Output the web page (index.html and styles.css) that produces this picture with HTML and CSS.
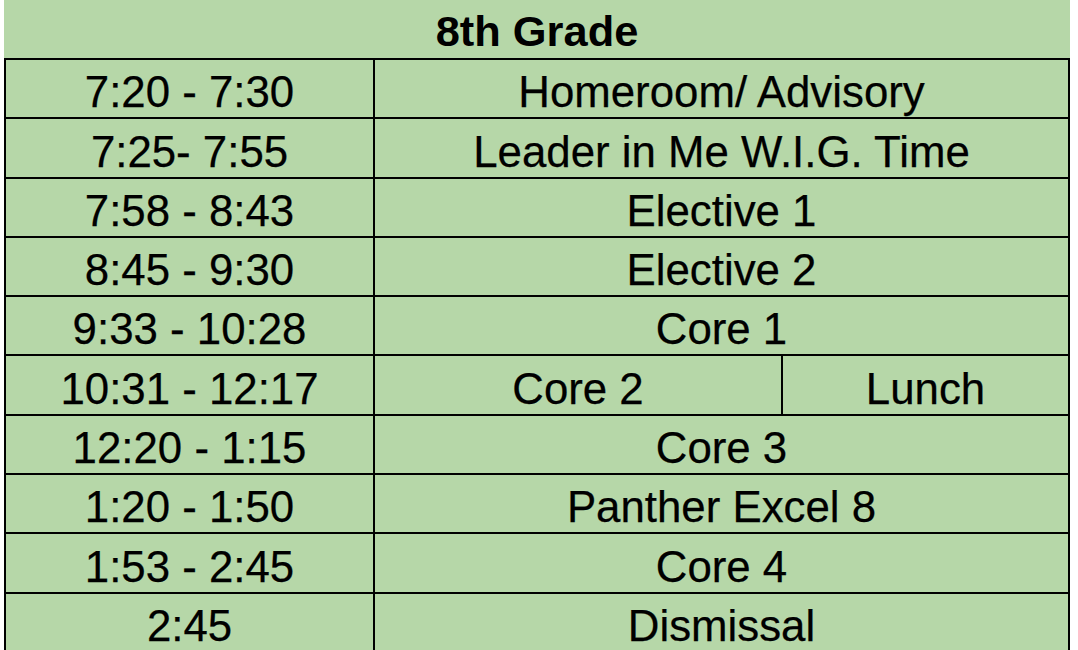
FILE: index.html
```html
<!DOCTYPE html>
<html lang="en">
<head>
<meta charset="utf-8">
<title>8th Grade Schedule</title>
<link rel="stylesheet" href="styles.css">
</head>
<body>
<div class="sheet">
  <div class="title">8th Grade</div>
  <div class="grid">
    <div class="cell">7:20 - 7:30</div>
    <div class="cell wide">Homeroom/ Advisory</div>
    <div class="cell">7:25- 7:55</div>
    <div class="cell wide">Leader in Me W.I.G. Time</div>
    <div class="cell">7:58 - 8:43</div>
    <div class="cell wide">Elective 1</div>
    <div class="cell">8:45 - 9:30</div>
    <div class="cell wide">Elective 2</div>
    <div class="cell">9:33 - 10:28</div>
    <div class="cell wide">Core 1</div>
    <div class="cell">10:31 - 12:17</div>
    <div class="cell">Core 2</div>
    <div class="cell">Lunch</div>
    <div class="cell">12:20 - 1:15</div>
    <div class="cell wide">Core 3</div>
    <div class="cell">1:20 - 1:50</div>
    <div class="cell wide">Panther Excel 8</div>
    <div class="cell">1:53 - 2:45</div>
    <div class="cell wide">Core 4</div>
    <div class="cell">2:45</div>
    <div class="cell wide">Dismissal</div>
  </div>
</div>
</body>
</html>
```

FILE: styles.css
```css
html, body {
  margin: 0;
  padding: 0;
  background: #ffffff;
  overflow: hidden;
  height: 650px;
}

body {
  font-family: "Liberation Sans", Arial, sans-serif;
  color: #000000;
}

.sheet {
  margin-left: 4px;
  width: 1066px;
  background: #b6d7a8;
}

.title {
  height: 58px;
  box-sizing: border-box;
  padding-bottom: 2px;
  display: flex;
  align-items: flex-end;
  justify-content: center;
  font-weight: bold;
  font-size: 43.4px;
  line-height: normal;
}

.grid {
  display: grid;
  grid-template-columns: 369px 408px 287px;
  grid-auto-rows: 59.3px;
  border-top: 2px solid #000;
  border-left: 2px solid #000;
}

.cell {
  box-sizing: border-box;
  border-right: 2px solid #000;
  border-bottom: 2px solid #000;
  display: flex;
  align-items: flex-end;
  justify-content: center;
  font-size: 43.8px;
  line-height: normal;
  white-space: nowrap;
  -webkit-text-stroke: 0.25px #000;
}

.wide {
  grid-column: 2 / 4;
}
```
